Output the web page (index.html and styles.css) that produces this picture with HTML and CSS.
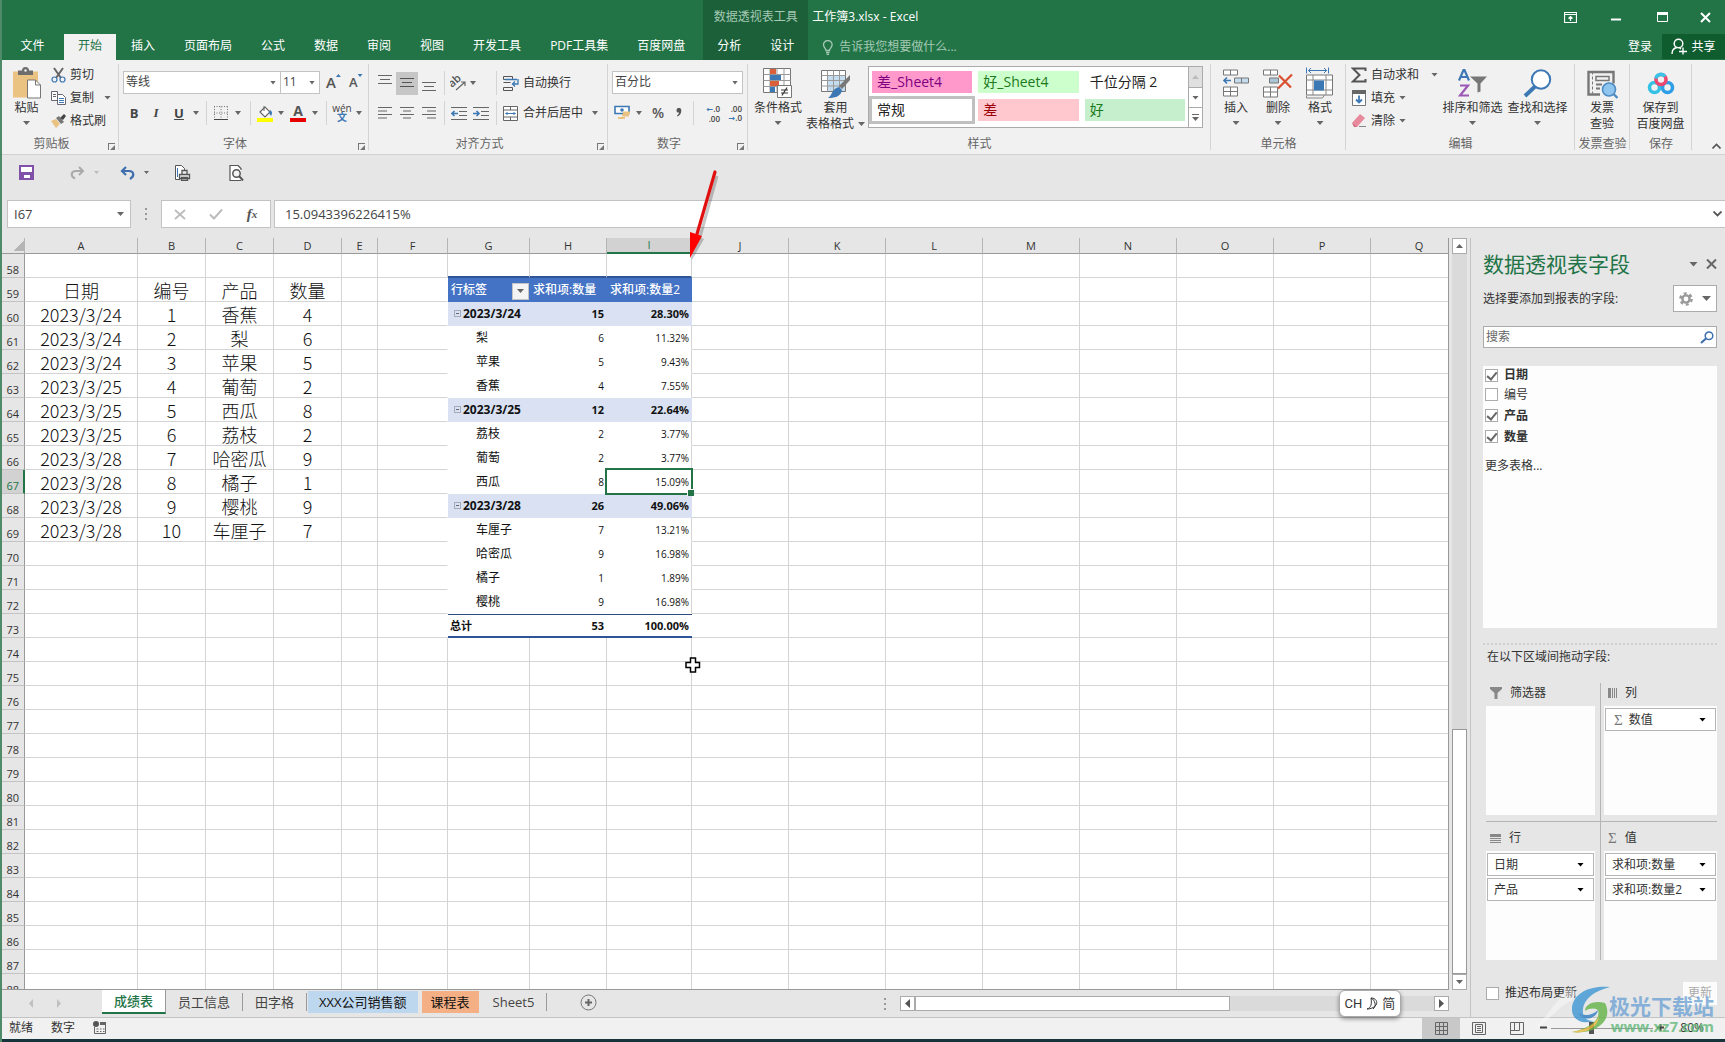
FILE: index.html
```html
<!DOCTYPE html>
<html lang="zh-CN">
<head>
<meta charset="utf-8">
<title>工作簿3.xlsx - Excel</title>
<link rel="stylesheet" href="styles.css">
</head>
<body>
<header class="titlebar">
  <nav class="tabs">
    <button class="tab tab-file">文件</button><button class="tab active">开始</button><button class="tab">插入</button><button class="tab">页面布局</button><button class="tab">公式</button><button class="tab">数据</button><button class="tab">审阅</button><button class="tab">视图</button><button class="tab">开发工具</button><button class="tab">PDF工具集</button><button class="tab">百度网盘</button>
  </nav>
  <div class="context">
    <div class="context-title">数据透视表工具</div>
    <div class="context-tabs"><button class="tab">分析</button><button class="tab">设计</button></div>
  </div>
  <div class="doc">
    <div class="doc-title">工作簿3.xlsx - Excel</div>
    <button class="tell"><svg width="12" height="15" viewBox="0 0 12 15"><path d="M4 10.500C4 8.500 1.500 7.500 1.500 4.800a4.300 4.300 0 0 1 8.600 0C10.100 7.500 7.500 8.500 7.500 10.500ZM4 12.500h3.500M4.500 14.300h2.500" fill="none" stroke="#a5c9b4" stroke-width="1.300"/></svg><span>告诉我您想要做什么...</span></button>
  </div>
  <div class="window">
    <div class="window-buttons">
      <button aria-label="功能区显示选项"><svg width="13" height="11" viewBox="0 0 13 11"><path d="M.5.5h12v10H.5ZM.5 2.500h12M6.500 9V4.500M4.500 6.500l2-2 2 2" fill="none" stroke="#fff" stroke-width="1.200"/></svg></button>
      <button aria-label="最小化"><svg width="10" height="11" viewBox="0 0 10 11"><path d="M0 7.500h10" stroke="#fff" stroke-width="2"/></svg></button>
      <button aria-label="最大化"><svg width="11" height="10" viewBox="0 0 11 10"><path d="M.5.5h10v9H.5Z" fill="none" stroke="#fff"/><path d="M0 0h11v3H0Z" fill="#fff"/></svg></button>
      <button aria-label="关闭"><svg width="11" height="11" viewBox="0 0 11 11"><path d="M1 1l9 9M10 1l-9 9" stroke="#fff" stroke-width="2"/></svg></button>
    </div>
    <div class="account">
      <button class="login">登录</button>
      <button class="share"><svg width="16" height="17" viewBox="0 0 16 17"><circle cx="7.500" cy="5.500" r="4.300" fill="none" stroke="#fff" stroke-width="1.500"/><path d="M1 16c0-4 2-6 5-6.500M8.500 10l1.500 1M8 13.500h8M12 9.500v7" fill="none" stroke="#fff" stroke-width="1.400"/></svg>共享</button>
    </div>
  </div>
</header>

<div class="ribbon">
  <section class="group g-clip">
    <div class="body">
      <button class="big"><svg width="30" height="32" viewBox="0 0 30 32"><path d="M1 4h25v26H1Z" fill="#eac282"/><path d="M6 3h4a3.500 3.500 0 0 1 7 0h4v4.500H6Z" fill="#6d6d6d"/><circle cx="13.500" cy="3" r="1.200" fill="#f1f1f1"/><path d="M15.500 12.500h8l5 5v13h-13Z" fill="#fff" stroke="#777"/><path d="M23.500 12.500v5h5" fill="none" stroke="#777"/></svg><span>粘贴</span><i class="dd"></i></button>
      <div class="stack">
        <button><svg width="15" height="16" viewBox="0 0 15 16"><path d="M3 1l7 10M12 1L5 11" stroke="#666" stroke-width="2"/><circle cx="3.500" cy="12.500" r="2.500" fill="none" stroke="#3c78b4" stroke-width="1.200"/><circle cx="11.500" cy="12.500" r="2.500" fill="none" stroke="#3c78b4" stroke-width="1.200"/></svg>剪切</button>
        <button><svg width="15" height="14" viewBox="0 0 15 14"><path d="M.5.5h6v9h-6ZM2 3.500h3M2 5.500h3" fill="#fff" stroke="#667"/><path d="M6.500 3.500h5l3 3v7h-8Z" fill="#fff" stroke="#667"/><path d="M8 7.500h5M8 9.500h5M8 11.500h5" stroke="#3c78b4"/></svg>复制<i class="dd"></i></button>
        <button><svg width="15" height="14" viewBox="0 0 15 14"><path d="M0 7l5-2 4 5-4 4Z" fill="#eac282"/><path d="M5 4l3-2 5 6-3 2Z" fill="#777"/><path d="M9 4l4-4 2 2-3 4Z" fill="#444"/></svg>格式刷</button>
      </div>
    </div>
    <footer class="has-launch">剪贴板<i class="launch"></i></footer>
  </section>

  <section class="group g-font">
    <div class="body rows">
      <div class="row">
        <label class="combo combo-font"><select aria-label="字体"><option>等线</option></select></label><label class="combo combo-size"><select aria-label="字号"><option>11</option></select></label>
        <button class="grow" aria-label="增大字号">A<i class="tri-up"></i></button><button class="shrink" aria-label="减小字号">A<i class="tri-dn"></i></button>
      </div>
      <div class="row font-tools">
        <button><b>B</b></button><button><em>I</em></button><button><u>U</u></button><i class="dd"></i><i class="sep"></i>
        <button aria-label="边框"><svg width="14" height="14" viewBox="0 0 14 14"><path d="M.5.500v12M7 .5v12M13.500.5v12M0 .5h14M0 7h14" stroke="#777" stroke-dasharray="1 1.500"/><path d="M0 13.500h14" stroke="#444"/></svg></button><i class="dd"></i><i class="sep"></i>
        <button aria-label="填充颜色"><svg width="17" height="17" viewBox="0 0 17 17"><path d="M3 7l5-5 5 5-5 5Z" fill="#fff" stroke="#666" stroke-width="1.200"/><path d="M7 6V1" stroke="#666"/><path d="M13 5c3 2 2 4 1 6l-2-3Z" fill="#3c78b4"/><path d="M0 13h16v4H0Z" fill="#ff0"/></svg></button><i class="dd"></i>
        <button class="color-a" aria-label="字体颜色">A</button><i class="dd"></i><i class="sep"></i>
        <button class="wen">wén<span>文</span></button><i class="dd"></i>
      </div>
    </div>
    <footer class="has-launch">字体<i class="launch"></i></footer>
  </section>

  <section class="group g-align">
    <div class="body rows">
      <div class="row align-top">
        <button aria-label="顶端对齐"><svg width="14" height="18" viewBox="0 0 14 18"><path d="M0 1.500h14M2 5.500h10M0 9.500h14" stroke="#666"/></svg></button>
        <button class="on" aria-label="垂直居中"><svg width="14" height="10" viewBox="0 0 14 10"><path d="M0 .5h14M2 4.500h10M0 8.500h14" stroke="#555"/></svg></button>
        <button aria-label="底端对齐"><svg width="14" height="18" viewBox="0 0 14 18"><path d="M0 8.500h14M2 12.500h10M0 16.500h14" stroke="#666"/></svg></button><i class="sep"></i>
        <button aria-label="方向"><svg width="17" height="16" viewBox="0 0 17 16"><text x="0" y="10" transform="rotate(-42 5 9)" font-size="11" fill="#555" font-weight="600" font-family="Open Sans">ab</text><path d="M6 15L15 7M15 11V7h-4" fill="none" stroke="#666" stroke-width="1.200"/></svg></button><i class="dd"></i><i class="sep"></i>
        <button class="txt"><svg width="16" height="15" viewBox="0 0 16 15"><path d="M.5.5h9v3h-9ZM.5 6.500h7M.5 11.500h9v3h-9Z" fill="none" stroke="#555"/><path d="M2 3.500h12M15 3v5h-5M12 5.500l-2.500 2.500 2.500 2.500" fill="none" stroke="#3c78b4" stroke-width="1.300"/></svg>自动换行</button>
      </div>
      <div class="row align-bottom">
        <button aria-label="左对齐"><svg width="14" height="12" viewBox="0 0 14 12"><path d="M0 .5h14M0 4h9M0 7.500h14M0 11h9" stroke="#666"/></svg></button>
        <button aria-label="居中"><svg width="14" height="12" viewBox="0 0 14 12"><path d="M0 .5h14M3 4h8M0 7.500h14M3 11h8" stroke="#666"/></svg></button>
        <button aria-label="右对齐"><svg width="14" height="12" viewBox="0 0 14 12"><path d="M0 .5h14M5 4h9M0 7.500h14M5 11h9" stroke="#666"/></svg></button><i class="sep"></i>
        <button aria-label="减少缩进"><svg width="16" height="13" viewBox="0 0 16 13"><path d="M0 .5h16M8 4.500h8M8 8.500h8M0 12.500h16" stroke="#666"/><path d="M7 6.500H1M3.500 4L1 6.500 3.500 9" fill="none" stroke="#3c78b4" stroke-width="1.600"/></svg></button>
        <button aria-label="增加缩进"><svg width="16" height="13" viewBox="0 0 16 13"><path d="M0 .5h16M8 4.500h8M8 8.500h8M0 12.500h16" stroke="#666"/><path d="M0 6.500h6M3.500 4L6 6.500 3.500 9" fill="none" stroke="#3c78b4" stroke-width="1.600"/></svg></button><i class="sep"></i>
        <button class="txt"><svg width="16" height="15" viewBox="0 0 16 15"><path d="M.5.500h14v14H.5ZM.5 4h14M.5 11h14M7.500.5V4M7.500 11v3.500" fill="#fff" stroke="#666"/><path d="M2.500 7.500h10M4.500 6L3 7.500 4.500 9M10.500 6L12 7.500 10.500 9" fill="none" stroke="#3c78b4"/></svg>合并后居中</button><i class="dd"></i>
      </div>
    </div>
    <footer class="has-launch">对齐方式<i class="launch"></i></footer>
  </section>

  <section class="group g-num">
    <div class="body rows">
      <div class="row"><label class="combo combo-num"><select aria-label="数字格式"><option>百分比</option></select></label></div>
      <div class="row num-tools">
        <button aria-label="会计数字格式"><svg width="17" height="16" viewBox="0 0 17 16"><path d="M1 1.500h14v7H1Z" fill="#fff" stroke="#3c78b4" stroke-width="1.600"/><circle cx="8" cy="5" r="1.800" fill="#3c78b4"/><path d="M8 9h7v2.500H8ZM4 12h7v2H4ZM9 6.500h7V9H9Z" fill="#eac282"/></svg></button><i class="dd"></i>
        <button class="pct">%</button><button aria-label="千位分隔样式"><svg width="6" height="10" viewBox="0 0 6 10"><path d="M.5 2.300a2.300 2.300 0 0 1 4.800 0C5.500 5 4 7.500 1.500 8.500L1 7.500C2.500 6.500 3 5.500 3 4.500 1.500 5 .5 3.800.5 2.300Z" fill="#555"/></svg></button><i class="sep"></i>
        <button class="dec"><span><b>←</b>.0</span><span>.00</span></button><button class="dec"><span>.00</span><span><b>→</b>.0</span></button>
      </div>
    </div>
    <footer class="has-launch">数字<i class="launch"></i></footer>
  </section>

  <section class="group g-style">
    <div class="body">
      <button class="big"><svg width="30" height="31" viewBox="0 0 30 31"><path d="M.5.500h27v24H.5Z" fill="#fff" stroke="#777"/><path d="M7 .5v24M14 .5v24M21 .5v24M.5 6.500h27M.5 12.500h27M.5 18.500h27" stroke="#999"/><path d="M7 1h6v5H7ZM7 13h9v5H7Z" fill="#d9603b"/><path d="M7 7h11v5H7ZM7 19h5v5H7Z" fill="#3c78b4"/><path d="M14.500 17.500h14v12h-14Z" fill="#fff" stroke="#777"/><path d="M18 22h7M18 25h7M24 19.500l-5 8" stroke="#333" stroke-width="1.200"/></svg><span>条件格式</span><i class="dd"></i></button>
      <button class="big"><svg width="30" height="31" viewBox="0 0 30 31"><path d="M.5 2.500h24v21H.5Z" fill="#fff" stroke="#777"/><path d="M7 8h17v15H7Z" fill="#c5dcee"/><path d="M6.500 2.500v21M12.500 2.500v21M18.500 2.500v21M.5 7.500h24M.5 12.500h24M.5 18h24" stroke="#999"/><path d="M29 7L18 18l3 3 8-9Z" fill="#777"/><path d="M18 19l3 3c-1 7-8 8-14 8 5-3 3-9 11-11Z" fill="#3c78b4"/></svg><span>套用<br>表格格式<i class="dd"></i></span></button>
      <div class="gallery">
        <div class="swatches">
          <button class="sw pink">差_Sheet4</button><button class="sw lime">好_Sheet4</button><button class="sw">千位分隔 2</button>
          <button class="sw normal">常规</button><button class="sw bad">差</button><button class="sw good">好</button>
        </div>
        <div class="gallery-nav"><button class="off" aria-label="上一行"><i class="dd up"></i></button><button aria-label="下一行"><i class="dd"></i></button><button class="more" aria-label="其他"><i class="dd"></i></button></div>
      </div>
    </div>
    <footer>样式</footer>
  </section>

  <section class="group g-cells">
    <div class="body">
      <button class="big"><svg width="28" height="30" viewBox="0 0 28 30"><path d="M1.500 1.500h14v5h-14ZM8.500 1.500v5M1.500 18.500h14v9h-14ZM8.500 18.500v9M1.500 23h14" fill="#fff" stroke="#777"/><path d="M12.500 9.500h14v5h-14ZM19.500 9.500v5" fill="#c5dcee" stroke="#777"/><path d="M9 12H2M5 9l-3 3 3 3" fill="none" stroke="#3c78b4" stroke-width="1.600"/></svg><span>插入</span><i class="dd"></i></button>
      <button class="big"><svg width="30" height="30" viewBox="0 0 30 30"><path d="M.5 1.500h14v5H.5ZM7.500 1.500v5M.5 18.500h14v10H.5ZM7.500 18.500v10M.5 23.500h14" fill="#fff" stroke="#777"/><path d="M6.500 9.500h9v5h-9Z" fill="#a9c6d6" stroke="#777"/><path d="M16 7l12 12M29 6L15 20" stroke="#d9502f" stroke-width="2.200"/></svg><span>删除</span><i class="dd"></i></button>
      <button class="big"><svg width="30" height="32" viewBox="0 0 30 32"><path d="M1.500 7.500h26v20h-26Z" fill="#fff" stroke="#777"/><path d="M8 7.500v20M21 7.500v20M1.500 12.500h26M1.500 22.500h26M1.500 28v2.500h16l2-3" fill="none" stroke="#888"/><path d="M9 13h10v10H9Z" fill="#3c78b4"/><path d="M1.500 0v6M23.500 0v6M3 3h19M6 .5L3.500 3 6 5.500M19 .5L21.500 3 19 5.500" fill="none" stroke="#3c78b4"/></svg><span>格式</span><i class="dd"></i></button>
    </div>
    <footer>单元格</footer>
  </section>

  <section class="group g-edit">
    <div class="body">
      <div class="stack">
        <button><svg width="16" height="16" viewBox="0 0 16 16"><path d="M14.500 4V1.500H2L8.500 8 2 14.500h12.500V12" fill="none" stroke="#555" stroke-width="2"/></svg>自动求和<i class="dd"></i></button>
        <button><svg width="16" height="16" viewBox="0 0 16 16"><path d="M1.500.5h13v15h-13Z" fill="#fff" stroke="#777"/><path d="M1 0h14v4H1Z" fill="#666"/><path d="M8 5.500v7M5 9.500l3 3 3-3" fill="none" stroke="#3c78b4" stroke-width="1.800"/></svg>填充<i class="dd"></i></button>
        <button><svg width="16" height="16" viewBox="0 0 16 16"><path d="M1 10L9 1l5 4-8 9H4Z" fill="#e88a9b"/><path d="M1 10l5 4H3Z" fill="#c96c7c"/><path d="M8 13.500h7" stroke="#888"/></svg>清除<i class="dd"></i></button>
      </div>
      <button class="big wide"><svg width="30" height="30" viewBox="0 0 30 30"><path d="M1 12L5.500 1.500h1L11 12M3 8.500h6" fill="none" stroke="#3c78b4" stroke-width="2.200"/><path d="M2 17h8L2 27h9" fill="none" stroke="#9b59b6" stroke-width="2.200"/><path d="M12 8h17l-6.500 7v8l-3 1v-9Z" fill="#777"/></svg><span>排序和筛选</span><i class="dd"></i></button>
      <button class="big wide"><svg width="30" height="30" viewBox="0 0 30 30"><circle cx="18" cy="11" r="9.200" fill="#fff" stroke="#3c78b4" stroke-width="2"/><path d="M12 18L2 27.500" stroke="#3c78b4" stroke-width="4"/></svg><span>查找和选择</span><i class="dd"></i></button>
    </div>
    <footer>编辑</footer>
  </section>

  <section class="group g-inv">
    <div class="body"><button class="big wide"><svg width="32" height="30" viewBox="0 0 32 30"><path d="M4 26H2.500V3.500h25V15M2 26h12" fill="none" stroke="#777" stroke-width="2.400"/><path d="M6.500 3v22" stroke="#777" stroke-dasharray="3 2"/><path d="M10 8h13v4H10Z" fill="none" stroke="#777" stroke-width="1.500"/><path d="M10 16h6M10 20h4" stroke="#777" stroke-width="2"/><circle cx="23" cy="21" r="6.500" fill="#8fc5ee" stroke="#4c8cc4" stroke-width="1.600"/><path d="M27.500 25.500l4 4" stroke="#4c8cc4" stroke-width="2.400"/></svg><span>发票<br>查验</span></button></div>
    <footer>发票查验</footer>
  </section>
  <section class="group g-save">
    <div class="body"><button class="big wide"><svg width="28" height="28" viewBox="0 0 28 28"><circle cx="7.500" cy="18" r="5" fill="none" stroke="#35c1e4" stroke-width="3.600"/><circle cx="20.500" cy="18" r="5" fill="none" stroke="#2e9fe6" stroke-width="3.600"/><circle cx="14" cy="10" r="5" fill="none" stroke="#ef476f" stroke-width="3.600"/><path d="M9 9a5 5 0 0 1 9-2" fill="none" stroke="#3ac4ea" stroke-width="3.600"/></svg><span>保存到<br>百度网盘</span></button></div>
    <footer>保存</footer>
  </section>
  <button class="collapse" aria-label="折叠功能区"><svg width="9" height="6" viewBox="0 0 9 6"><path d="M.5 5.500l4-4 4 4" fill="none" stroke="#555" stroke-width="1.600"/></svg></button>
</div>

<div class="quick">
  <button aria-label="保存"><svg width="15" height="15" viewBox="0 0 15 15"><path d="M1 1h13v13H1Z" fill="#fff" stroke="#8150a8" stroke-width="2"/><path d="M1 7h13v7h-3v-4H5v4H1Z" fill="#8150a8"/></svg></button>
  <button aria-label="恢复"><svg width="15" height="14" viewBox="0 0 15 14"><path d="M9 1l4 4-4 4M13 5H6C1 5 0 10 5 12.500" fill="none" stroke="#aaa" stroke-width="2"/></svg></button><i class="dd faint"></i>
  <button aria-label="撤消"><svg width="15" height="14" viewBox="0 0 15 14"><path d="M6 1L2 5l4 4M2 5h7c5 0 6 5 1 8" fill="none" stroke="#3f6fad" stroke-width="2.200"/></svg></button><i class="dd"></i>
  <button aria-label="快速打印"><svg width="17" height="16" viewBox="0 0 17 16"><path d="M6 14.500H1.500V.5h6l3 3V6" fill="#fff" stroke="#555"/><path d="M3.500 3v9" stroke="#3c78b4"/><path d="M5.500 9.500h10v4h-10ZM8 5.500h5v4H8ZM7.500 12.500h6v3h-6Z" fill="#eee" stroke="#555" stroke-width="1.300"/></svg></button>
  <button aria-label="打印预览"><svg width="15" height="16" viewBox="0 0 15 16"><path d="M12 5V3.500L9 .5H1v15h11" fill="#fff" stroke="#555" stroke-width="1.200"/><circle cx="7.500" cy="8.500" r="3.700" fill="#f3f3f3" stroke="#555" stroke-width="1.500"/><path d="M10 11l4 4.500" stroke="#555" stroke-width="2"/></svg></button>
</div>

<div class="formula">
  <div class="namebox"><input aria-label="名称框" value="I67"><i class="dd"></i></div>
  <i class="dots"></i>
  <div class="fx">
    <button aria-label="取消"><svg width="12" height="11" viewBox="0 0 12 11"><path d="M1 1l10 9M11 1L1 10" stroke="#bbb" stroke-width="1.700"/></svg></button>
    <button aria-label="输入"><svg width="14" height="11" viewBox="0 0 14 11"><path d="M1 5.500l4 4 8-9" fill="none" stroke="#bbb" stroke-width="2"/></svg></button>
    <button class="fn">f<sub>x</sub></button>
  </div>
  <div class="entry"><input aria-label="编辑栏" value="15.0943396226415%"><button aria-label="展开编辑栏"><svg width="9" height="6" viewBox="0 0 9 6"><path d="M.5.5l4 4 4-4" fill="none" stroke="#555" stroke-width="1.800"/></svg></button></div>
</div>

<main>
  <div class="book">
    <div class="sheet-row">
      <div class="sheet">
        <table id="grid"></table>
        <svg class="cursor" width="16" height="16" viewBox="0 0 16 16"><path d="M5.500 1h5v4.500h4v5h-4V15h-5v-4.500H1v-5h4.500Z" fill="#fff" stroke="#000" stroke-width="1.500"/></svg>
      </div>
      <div class="vscroll"><button aria-label="向上滚动"><i class="dd up"></i></button><div class="vtrack"><div class="vthumb"></div></div><button aria-label="向下滚动"><i class="dd"></i></button></div>
    </div>
    <div class="sheet-tabs">
      <div class="nav-arrows"><i class="tri-l"></i><i class="tri-r"></i></div>
      <button class="current">成绩表</button><button>员工信息</button><button>田字格</button><button class="blue">XXX公司销售额</button><button class="orange">课程表</button><button>Sheet5</button>
      <button class="add" aria-label="新工作表"><svg width="17" height="17" viewBox="0 0 17 17"><circle cx="8.500" cy="8.500" r="7.500" fill="none" stroke="#777"/><path d="M8.500 5v7M5 8.500h7" stroke="#666" stroke-width="2"/></svg></button>
      <i class="dots"></i>
      <div class="hscroll"><button aria-label="向左滚动"><i class="tri-l"></i></button><div class="htrack"><div class="hthumb"></div></div><button aria-label="向右滚动"><i class="tri-r"></i></button></div>
    </div>
  </div>

  <aside class="pane">
    <div class="pane-head"><h2>数据透视表字段</h2><i class="dd"></i><button aria-label="关闭"><svg width="11" height="10" viewBox="0 0 11 10"><path d="M1 .5l9 9M10 .5l-9 9" stroke="#666" stroke-width="2"/></svg></button></div>
    <div class="pane-sub"><span>选择要添加到报表的字段:</span><button aria-label="工具"><svg width="14" height="14" viewBox="0 0 14 14"><circle cx="7" cy="7" r="3.600" fill="none" stroke="#999" stroke-width="2.400"/><circle cx="7" cy="7" r="5.600" fill="none" stroke="#999" stroke-width="2.400" stroke-dasharray="2.930 2.930"/></svg><i class="dd"></i></button></div>
    <div class="search"><input aria-label="搜索字段" placeholder="搜索"><svg width="14" height="13" viewBox="0 0 14 13"><circle cx="9" cy="4.800" r="3.800" fill="none" stroke="#3f6fad" stroke-width="1.500"/><path d="M6 7.500L1 12" stroke="#3f6fad" stroke-width="2.200"/></svg></div>
    <div class="fields">
      <label class="on"><input type="checkbox" checked>日期</label>
      <label><input type="checkbox">编号</label>
      <label class="on"><input type="checkbox" checked>产品</label>
      <label class="on"><input type="checkbox" checked>数量</label>
      <a href="#">更多表格...</a>
    </div>
    <div class="drag">在以下区域间拖动字段:</div>
    <div class="areas">
      <div class="area"><h3><svg width="12" height="12" viewBox="0 0 12 12"><path d="M0 0h12v2L7.500 6v6h-3V6L0 2Z" fill="#888"/></svg>筛选器</h3><div class="drop"></div></div>
      <div class="area"><h3><svg width="9" height="10" viewBox="0 0 9 10"><path d="M0 0h3v10H0Z" fill="#888"/><path d="M4.500 0v10M6.500 0v10M8.500 0v10" stroke="#888"/></svg>列</h3><div class="drop"><button><span class="sigma">Σ</span>数值<i class="dd"></i></button></div></div>
      <div class="area"><h3><svg width="11" height="9" viewBox="0 0 11 9"><path d="M0 0h11v3H0Z" fill="#888"/><path d="M0 4.500h11M0 6.500h11M0 8.500h11" stroke="#888"/></svg>行</h3><div class="drop"><button>日期<i class="dd"></i></button><button>产品<i class="dd"></i></button></div></div>
      <div class="area"><h3><span class="sigma">Σ</span>值</h3><div class="drop"><button>求和项:数量<i class="dd"></i></button><button>求和项:数量2<i class="dd"></i></button></div></div>
    </div>
    <div class="defer"><label><input type="checkbox">推迟布局更新</label><button>更新</button></div>
  </aside>
</main>

<div class="status">
  <span>就绪</span><span>数字</span>
  <svg width="13" height="13" viewBox="0 0 13 13"><circle cx="3" cy="3" r="3" fill="#555"/><path d="M7 1h6v3H7Z" fill="#666"/><path d="M1.500 6v6.500h11V4M3.500 8h2M7 8h1.500M10 8h1.500M3.500 10.500h2M7 10.500h1.500M10 10.500h1.500" fill="none" stroke="#666"/></svg>
  <div class="views">
    <button class="on" aria-label="普通"><svg width="13" height="13" viewBox="0 0 13 13"><path d="M.5.5h12v12H.5ZM4.500.5v12M8.500.5v12M.5 4.500h12M.5 8.500h12" fill="none" stroke="#666"/></svg></button>
    <button aria-label="页面布局"><svg width="14" height="13" viewBox="0 0 14 13"><path d="M.5.5h13v12H.5ZM3.500 2.500h7v8h-7ZM5 4.500h4M5 6.500h4M5 8.500h4" fill="none" stroke="#666"/></svg></button>
    <button aria-label="分页预览"><svg width="14" height="13" viewBox="0 0 14 13"><path d="M.5.5h13v12H.5ZM4.500.5v8M9.500.5v8M.5 8.500h9" fill="none" stroke="#666"/></svg></button>
  </div>
  <button class="zoom-btn" aria-label="缩小"><svg width="7" height="7" viewBox="0 0 7 7"><path d="M0 3.500h7" stroke="#444" stroke-width="2"/></svg></button>
  <input type="range" aria-label="缩放" min="10" max="190" value="80">
  <button class="zoom-btn" aria-label="放大"><svg width="7" height="7" viewBox="0 0 7 7"><path d="M0 3.500h7M3.500 0v7" stroke="#444" stroke-width="2"/></svg></button>
  <span class="zoom">80%</span>
</div>

<svg class="arrow" width="40" height="96" viewBox="0 0 40 96"><g opacity=".3" transform="translate(3 3)"><path d="M30 5L13 66" stroke="#444" stroke-width="3"/><path d="M5 89L4 62l13 6Z" fill="#444"/></g><path d="M31 4L13 66" stroke="#e01010" stroke-width="3.200" stroke-linecap="round"/><path d="M6 90L6 64l6 2 6 2Z" fill="#f00"/></svg>
<div class="ime">CH <svg width="12" height="13" viewBox="0 0 12 13"><path d="M5 1c4 2 6 8 2 11M5 1c5 0 7 4 5 7-2 3-6 4-9 4 4-1 5-5 4-11" fill="none" stroke="#333"/></svg> 简</div>
<div class="mark">
  <svg width="76" height="52" viewBox="0 0 76 52"><path d="M0 46L34 4l8 6-6 8C26 22 20 32 0 46Z" fill="#fff" opacity=".5"/><path d="M75 4C52 2 38 12 37 25c-1 12 11 17 22 13-8 0-12-4-11-12 1-10 11-18 27-22Z" fill="#3c97d4"/><path d="M70 20C58 17 50 22 50 28c5-3 9-3 13-1 3 8-6 18-26 22 24 3 42-12 33-29Z" fill="#62b345"/><path d="M43 30c6 3 14 3 20-3-1 8-14 13-20 3Z" fill="#2f7fc4"/><path d="M37 49c14-2 24-8 27-16-1 12-13 18-27 16Z" fill="#eab839"/></svg>
  <div><strong>极光下载站</strong><span>www.xz7.com</span></div>
</div>
<script src="grid.js"></script>
</body>
</html>
```
FILE: styles.css
```css
* { box-sizing: border-box; }
body {
  margin: 0; height: 100vh; display: flex; flex-direction: column; overflow: hidden; position: relative;
  border-left: 2px solid #4f8a69; background: #e6e6e6; color: #333;
  font: 12px/16px "Open Sans", "Noto Sans CJK SC", sans-serif;
}
button { border: 0; background: none; padding: 0; margin: 0; font: inherit; color: inherit; display: flex; align-items: center; justify-content: center; white-space: nowrap; }
input, select { font: inherit; color: inherit; border: 0; outline: 0; margin: 0; padding: 0; background: none; min-width: 0; }
svg { flex: none; display: block; }
i { flex: none; }

/* small drawn triangles */
.dd { width: 7px; height: 4px; background: #666; clip-path: polygon(0 0, 100% 0, 50% 100%); }
.dd.up { clip-path: polygon(50% 0, 100% 100%, 0 100%); }
.dd.faint { background: #bbb; }
.tri-l, .tri-r { width: 5px; height: 9px; background: #555; clip-path: polygon(100% 0, 100% 100%, 0 50%); }
.tri-r { clip-path: polygon(0 0, 100% 50%, 0 100%); }

/* title bar */
.titlebar { display: flex; align-items: flex-end; height: 60px; flex: none; background: #227447; color: #fff; }
.tabs, .context-tabs { display: flex; gap: 1px; }
.tab { height: 26px; padding: 0 14px 2px; }
.tab-file { width: 61px; }
.tab.active { background: #f1f1f1; color: #227447; }
.context { background: #1b6039; margin-left: 4px; height: 60px; }
.context-title { height: 34px; line-height: 34px; text-align: center; color: #a5c9b4; }
.doc { height: 60px; padding-left: 4px; }
.doc-title { height: 34px; line-height: 34px; }
.tell { height: 26px; padding-left: 10px; gap: 5px; color: #a5c9b4; }
.window { margin-left: auto; height: 60px; width: 178px; }
.window-buttons { display: grid; grid-template-columns: 46px 46px 46px 1fr; height: 34px; }
.account { display: flex; height: 26px; justify-content: flex-end; padding-bottom: 1px; }
.login { padding: 0 10px; }
.share { background: #0f5c2f; width: 63px; gap: 4px; }

/* ribbon */
.ribbon { display: flex; height: 95px; flex: none; background: #f1f1f1; border-bottom: 1px solid #d2d2d2; }
.group { position: relative; height: 94px; padding-top: 2px; flex: none; }
.group::after { content: ""; position: absolute; right: 0; top: 4px; bottom: 4px; border-right: 1px solid #d4d4d4; }
.group .body { display: flex; height: 74px; }
.group footer { position: relative; height: 16px; text-align: center; color: #666; }
.group .has-launch { padding-right: 18px; }
.launch { position: absolute; right: 4px; bottom: 2px; width: 7px; height: 7px; border-left: 1px solid #777; border-top: 1px solid #777; }
.launch::after { content: ""; position: absolute; right: 0; bottom: 0; width: 5px; height: 5px; background: #777; clip-path: polygon(100% 0, 100% 100%, 0 100%); }
.g-clip { width: 117px; }
.g-font { width: 250px; }
.g-align { width: 239px; }
.g-num { width: 140px; }
.g-style { width: 463px; }
.g-cells { width: 135px; }
.g-edit { width: 229px; }
.g-inv { width: 55px; }
.g-save { width: 62px; }
.big { flex-direction: column; justify-content: flex-start; width: 42px; padding-top: 5px; line-height: 16px; }
.big svg { height: 33px; }
.big > .dd { margin-top: 5px; }
.big span .dd { display: inline-block; margin: 0 0 2px 4px; }
.stack { display: grid; grid-template-rows: repeat(3, 23px); justify-items: start; padding-top: 1px; }
.stack button { gap: 4px; }
.stack .dd { margin-left: 8px; }
.g-clip .big { width: 49px; }
.g-clip .dd { margin-left: 6px; }
.g-clip .big .dd { margin-left: 0; }
.rows.body { flex-direction: column; gap: 8px; padding: 9px 0 0 4px; }
.row { display: flex; height: 22px; align-items: center; }
.row .dd { justify-self: center; width: 6px; }
.sep { width: 1px; height: 24px; background: #d4d4d4; justify-self: center; }
.combo { position: relative; height: 23px; background: #fff; border: 1px solid #c3c3c3; display: block; }
.combo select { appearance: none; width: 100%; height: 21px; padding-left: 2px; color: #444; }
.combo::after { content: ""; position: absolute; right: 4px; top: 9px; width: 6px; height: 4px; background: #666; clip-path: polygon(0 0, 100% 0, 50% 100%); }
.combo-font { width: 158px; }
.combo-size { width: 40px; margin-left: -1px; }
.combo-num { width: 131px; }
.grow, .shrink { align-items: center; color: #555; font-size: 15px; font-weight: 600; margin-left: 6px; }
.shrink { font-size: 13px; margin-left: 8px; }
.tri-up, .tri-dn { width: 5px; height: 3px; margin-bottom: 13px; background: #3c78b4; clip-path: polygon(50% 0, 100% 100%, 0 100%); }
.tri-dn { clip-path: polygon(0 0, 100% 0, 50% 100%); }
.font-tools { display: grid; grid-template-columns: 22px 22px 24px 10px 10px 20px 14px 10px 20px 12px 22px 12px 10px 22px 12px; }
.font-tools b, .font-tools em, .font-tools u { font-size: 13px; font-weight: 700; color: #444; }
.font-tools em { font-family: "Liberation Serif", serif; }
.color-a { font-size: 14px; line-height: 14px; font-weight: 700; color: #555; border-bottom: 4px solid #e60000; width: 16px; justify-self: center; }
.wen { flex-direction: column; font-size: 10px; line-height: 8px; color: #444; }
.wen span { color: #3c78b4; font-size: 10px; line-height: 10px; font-weight: 700; }
.align-top { display: grid; grid-template-columns: 22px 22px 22px 8px 20px 24px 8px auto; justify-content: start; }
.align-bottom { display: grid; grid-template-columns: 22px 22px 22px 8px 22px 22px 8px 88px 14px; }
.rows .align-top, .rows .align-bottom { padding-left: 1px; }
.row.align-top .dd { justify-self: start; margin-left: 2px; }
.row .on { background: #c6c6c6; height: 23px; }
.txt { gap: 4px; padding-left: 3px; justify-content: flex-start; }
.num-tools { display: grid; grid-template-columns: 20px 14px 24px 18px 10px 22px 22px; }
.pct { font-size: 14px; font-weight: 600; color: #555; }
.dec { flex-direction: column; font-size: 8px; line-height: 9px; align-items: flex-end; color: #444; font-weight: 600; }
.dec b { color: #3c78b4; font-family: "DejaVu Sans", sans-serif; }

.g-style .body { padding-left: 5px; }
.g-style .big { width: 50px; }
.g-style .big + .big { width: 65px; }
.gallery { display: flex; flex: 1; margin: 4px 8px 8px 0; background: #fff; border: 1px solid #ababab; }
.swatches { flex: 1; display: grid; grid-template-columns: repeat(3, 1fr); grid-template-rows: 22px 22px; gap: 6px; padding: 4px 3px 3px 3px; }
.sw { justify-content: flex-start; padding-left: 5px; font-size: 14px; color: #222; height: 22px; }
.pink { background: #ff99cc; color: #800080; }
.lime { background: #ccffcc; color: #1b7a1b; }
.bad { background: #ffc7ce; color: #9c0006; }
.good { background: #c6efce; color: #1b7a1b; }
.normal { outline: 3px solid #c0c0c0; }
.gallery-nav { width: 14px; display: grid; grid-template-rows: repeat(3, 1fr); border-left: 1px solid #ababab; }
.gallery-nav button + button { border-top: 1px solid #ababab; }
.gallery-nav .off { background: #e0e0e0; }
.off .dd { background: #bbb; }
.more { flex-direction: column; gap: 2px; }
.more::before { content: ""; width: 7px; height: 1px; background: #666; }
.g-cells .body { padding-left: 4px; }
.g-edit .body { padding-left: 5px; }
.g-edit .stack { width: 89px; }
.g-edit .stack button + button .dd { margin-left: 0; }
.wide { width: 65px; flex: none; }
.g-inv .wide { width: 54px; }
.g-save .wide { width: 61px; }
.collapse { margin: 83px 4px 0 auto; height: 6px; width: 10px; }

/* quick access and formula bar */
.quick { display: flex; align-items: center; height: 35px; flex: none; padding-left: 17px; }
.quick button:nth-of-type(2) { margin-left: 36px; }
.quick button:nth-of-type(3) { margin-left: 21px; }
.quick .dd { margin-left: 9px; width: 5px; height: 3px; }
.quick button:nth-of-type(4) { margin-left: 25px; }
.quick button:nth-of-type(5) { margin-left: 38px; }
.formula { display: flex; height: 28px; flex: none; margin: 10px 0; font-size: 13px; color: #444; }
.namebox { display: flex; align-items: center; width: 124px; margin-left: 5px; padding: 0 6px; background: #fff; border: 1px solid #c3c3c3; }
.namebox input { flex: 1; }
.dots { width: 2px; height: 12px; margin: auto 14px; background: repeating-linear-gradient(#999 0 2px, transparent 2px 5px); }
.fx { display: grid; grid-template-columns: repeat(3, 1fr); width: 110px; background: #fff; border: 1px solid #c3c3c3; }
.fn { font: italic 700 15px/16px "Liberation Serif", serif; color: #555; }
.fn sub { font-size: 11px; line-height: 8px; }
.entry { flex: 1; display: flex; margin-left: 3px; background: #fff; border: 1px solid #c3c3c3; border-right: 0; padding: 0 3px 0 10px; }
.entry input { flex: 1; }

/* worksheet */
main { flex: 1; display: flex; min-height: 0; }
.book { flex: 1; display: flex; flex-direction: column; min-width: 0; }
.sheet-row { flex: 1; display: flex; min-height: 0; }
.sheet { position: relative; flex: 1; overflow: hidden; border-right: 1px solid #999; border-bottom: 1px solid #999; }
table { width: calc(100% + 20px); table-layout: fixed; border-spacing: 0; color: #111; }
th, td { padding: 0; font-weight: 400; white-space: nowrap; }
thead th { height: 16px; line-height: 15px; font-size: 11px; border-right: 1px solid #b5b5b5; border-bottom: 1px solid #999; background: #e6e6e6; color: #333; }
thead .picked { background: #d2d2d2; border-bottom: 2px solid #227447; line-height: 14px; color: #227447; }
thead th:first-child { background: linear-gradient(135deg, transparent 50%, #b5b5b5 50%) 12px 3px / 10px 10px no-repeat #e6e6e6; }
tbody th { height: 24px; padding: 9px 5px 0 0; text-align: right; line-height: 14px; font-size: 11px; background: #e6e6e6; color: #333; border-right: 1px solid #999; border-bottom: 1px solid #c3c3c3; }
tbody .picked { background: #d2d2d2; color: #227447; border-right: 2px solid #227447; padding-right: 4px; }
td { height: 24px; border-right: 1px solid #d4d4d4; border-bottom: 1px solid #d4d4d4; background: #fff; }
.data { font-family: "Noto Sans CJK SC", sans-serif; font-weight: 300; font-size: 18px; line-height: 21px; padding-top: 2px; text-align: center; }
.above { border-bottom: 2px solid #2f5597; }
.beside { border-right-color: #fff; }
.pv { border-color: #fff; font-size: 11px; line-height: 22px; text-align: right; padding: 0 2px; }
.pv.pct-col { border-right-color: #d4d4d4; }
.pv.small { font-size: 10px; }
.pv.label { text-align: left; }
.pv.item { font-size: 12px; padding-left: 28px; }
.pv.sub { background: #d9e1f2; border-color: #d9e1f2; font-weight: 700; }
.pv.sub.label { font-size: 12px; }
.pv.head { background: #4472c4; border-color: #4472c4; color: #fff; text-align: left; padding-left: 3px; font-size: 12px; font-weight: 500; }
.pv.total { border-right: 0; border-top: 1px solid #2f4b7c; border-bottom: 2px solid #2f5597; font-weight: 700; line-height: 20px; padding-right: 3px; }
.minus { display: inline-block; width: 7px; height: 7px; margin: 0 2px 1px 4px; border: 1px solid #a5acb5; vertical-align: middle; background: linear-gradient(#667, #667) 1px 2px / 3px 1px no-repeat; }
.filter { float: right; width: 17px; height: 17px; margin-top: 4px; margin-right: -2px; background: #f4f4f4; border: 1px solid #c3c3c3; }
.cell-on { position: relative; }
.cell-on::before { content: ""; position: absolute; inset: -2px; border: 2px solid #227447; }
.cell-on::after { content: ""; position: absolute; right: -3px; bottom: -3px; width: 6px; height: 6px; background: #227447; border: 1px solid #fff; border-width: 1px 0 0 1px; }
.cursor { position: absolute; left: 683px; top: 419px; }
.vscroll { width: 15px; margin: 0 3px; display: flex; flex-direction: column; }
.vscroll button { height: 16px; background: #fff; border: 1px solid #ababab; }
.vtrack { flex: 1; background: #dadada; display: flex; flex-direction: column; justify-content: flex-end; }
.vthumb { height: 34%; background: #fff; border: 1px solid #999; }
.sheet-tabs { display: flex; height: 27px; flex: none; padding-right: 21px; }
.sheet-tabs > button { height: 18px; margin: 3px 0; padding: 0 12px; border-right: 1px solid #999; font-size: 13px; color: #444; }
.nav-arrows { display: flex; gap: 24px; width: 100px; padding: 9px 0 0 27px; }
.nav-arrows i { background: #c0c0c0; width: 4px; }
.sheet-tabs > .current { height: 24px; margin: 0; background: #fff; color: #227447; font-weight: 500; border-right: 1px solid #999; border-bottom: 2px solid #227447; }
.sheet-tabs > .blue, .sheet-tabs > .orange { height: 22px; margin: 1px 0 0 1px; padding: 0 11px; background: #bdd7ee; color: #111; border-right: 2px solid #e6e6e6; }
.sheet-tabs > .orange { background: #f4b084; margin-left: 2px; padding: 0 9px; }
.sheet-tabs > .add { border: 0; margin-left: 21px; }
.sheet-tabs .dots { margin: 8px 14px 0 auto; }
.hscroll { width: 549px; display: flex; height: 15px; margin-top: 6px; }
.hscroll button { width: 15px; background: #fff; border: 1px solid #ababab; }
.htrack { flex: 1; background: #dadada; }
.hthumb { width: 315px; height: 15px; background: #fff; border: 1px solid #ababab; }

/* field list */
.pane { width: 255px; flex: none; border-left: 1px solid #c3c3c3; padding: 12px 8px 12px 12px; display: flex; flex-direction: column; }
.pane-head { display: flex; align-items: center; height: 28px; gap: 8px; }
h2 { margin: 0; flex: 1; font-size: 21px; line-height: 28px; font-weight: 400; color: #227447; }
.pane-head .dd, .pane-sub .dd { width: 9px; height: 5px; }
.pane-sub { display: flex; align-items: center; justify-content: space-between; height: 27px; margin-top: 7px; }
.pane-sub button { width: 44px; height: 27px; background: #fff; border: 1px solid #ababab; gap: 9px; }
.search { display: flex; align-items: center; height: 22px; margin-top: 14px; padding: 0 2px; background: #fff; border: 1px solid #ababab; flex: none; }
.search input { flex: 1; }
.search input::placeholder { color: #666; opacity: 1; }
.fields { flex: 1; margin-top: 18px; background: #fdfdfd; padding: 0 2px; min-height: 0; overflow: hidden; }
.fields label { display: flex; align-items: center; height: 21px; gap: 6px; }
.fields label:first-child { height: 18px; }
.fields .on { font-weight: 600; }
.fields a { display: block; margin-top: 11px; color: #333; text-decoration: none; }
input[type=checkbox] { appearance: none; width: 13px; height: 13px; border: 1px solid #ababab; background: #fff; position: relative; flex: none; }
input[type=checkbox]:checked::after { content: ""; position: absolute; left: 3px; top: 0; width: 4px; height: 8px; border: solid #666; border-width: 0 2px 2px 0; transform: rotate(40deg); }
.drag { margin-top: 15px; padding: 4px 0 0 4px; height: 40px; border-top: 2px dotted #d0d0d0; }
.areas { display: grid; grid-template-columns: 114px 1fr; margin-left: 3px; }
.area { padding-right: 5px; height: 139px; }
.area:nth-child(even) { border-left: 1px solid #b5b5b5; padding: 0 0 0 3px; }
.area:nth-child(n+3) { border-top: 1px solid #b5b5b5; padding-top: 6px; }
.area:nth-child(-n+2) { height: 138px; }
h3 { margin: 0; height: 23px; display: flex; align-items: center; gap: 8px; padding: 0 0 3px 4px; font-size: 12px; font-weight: 400; }
.drop { height: 109px; background: #fdfdfd; padding: 2px 1px; display: flex; flex-direction: column; gap: 2px; }
.drop button { height: 23px; flex: none; background: #fff; border: 1px solid #b5b5b5; padding: 0 9px 0 6px; justify-content: flex-start; }
.drop .dd { margin-left: auto; background: #000; }
.sigma { font: 15px/16px "Liberation Serif", serif; color: #777; }
.drop .sigma { margin: 0 6px 0 2px; }
.defer { display: flex; justify-content: space-between; align-items: center; height: 24px; margin: 21px 0 0 3px; }
.defer label { display: flex; align-items: center; gap: 6px; }
.defer button { width: 34px; height: 23px; background: #fcfcfc; color: #aaa; }

/* status bar */
.status { display: flex; align-items: center; flex: none; height: 25px; padding: 0 21px 2px 7px; background: #f1f1f1; border-top: 1px solid #c3c3c3; border-bottom: 3px solid #17343c; gap: 18px; }
.views { display: flex; margin-left: auto; align-self: stretch; margin-bottom: -2px; }
.views button { width: 38px; }
.views .on { background: #c8c8c8; }
.status .zoom-btn { margin: 0 -14px 0 -14px; }
input[type=range] { appearance: none; width: 102px; height: 14px; background: linear-gradient(#999, #999) 0 7px / 100% 1px no-repeat; }
input[type=range]::-webkit-slider-thumb { appearance: none; width: 5px; height: 12px; background: #555; }
.zoom { margin-left: 12px; }

/* things floating over the window */
.arrow { position: absolute; left: 682px; top: 168px; }
.ime { position: absolute; left: 1337px; top: 990px; width: 62px; height: 27px; display: flex; align-items: center; justify-content: center; gap: 4px; background: #fff; border: 1px solid #aaa; border-radius: 6px; box-shadow: 0 2px 4px #0006; font: 13px/16px Roboto, "Noto Sans CJK SC", sans-serif; white-space: nowrap; }
.mark { position: absolute; right: 11px; bottom: 7px; display: flex; opacity: .8; pointer-events: none; }
.mark div { display: flex; flex-direction: column; justify-content: flex-end; margin-left: -2px; }
.mark strong { font-size: 21px; line-height: 22px; color: #6fa3d4; text-align: right; }
.mark span { font: 700 15px/18px "Open Sans", sans-serif; color: #62b87a; text-align: right; }
```
FILE: grid.js
```js
// Builds the visible part of the worksheet: rows 58-88, columns A-Q.
const cols = [['A', 113], ['B', 68], ['C', 68], ['D', 68], ['E', 36], ['F', 70], ['G', 82], ['H', 77], ['I', 85],
  ['J', 97], ['K', 97], ['L', 97], ['M', 97], ['N', 97], ['O', 97], ['P', 97], ['Q', 0]];

const orders = [
  ['日期', '编号', '产品', '数量'],
  ['2023/3/24', 1, '香蕉', 4], ['2023/3/24', 2, '梨', 6], ['2023/3/24', 3, '苹果', 5],
  ['2023/3/25', 4, '葡萄', 2], ['2023/3/25', 5, '西瓜', 8], ['2023/3/25', 6, '荔枝', 2],
  ['2023/3/28', 7, '哈密瓜', 9], ['2023/3/28', 8, '橘子', 1], ['2023/3/28', 9, '樱桃', 9],
  ['2023/3/28', 10, '车厘子', 7]];

const pivot = [
  ['head', '行标签', '求和项:数量', '求和项:数量2'],
  ['sub', '2023/3/24', 15, '28.30%'], ['item', '梨', 6, '11.32%'], ['item', '苹果', 5, '9.43%'], ['item', '香蕉', 4, '7.55%'],
  ['sub', '2023/3/25', 12, '22.64%'], ['item', '荔枝', 2, '3.77%'], ['item', '葡萄', 2, '3.77%'], ['item', '西瓜', 8, '15.09%'],
  ['sub', '2023/3/28', 26, '49.06%'], ['item', '车厘子', 7, '13.21%'], ['item', '哈密瓜', 9, '16.98%'],
  ['item', '橘子', 1, '1.89%'], ['item', '樱桃', 9, '16.98%'],
  ['total', '总计', 53, '100.00%']];

function pivotCell(line, i, row) {
  const kind = line[0];
  const classes = ['pv'];
  let text = line[i + 1];
  if (kind !== 'item') classes.push(kind);
  if (i === 0) {
    classes.push('label');
    if (kind === 'item') classes.push('item');
    if (kind === 'sub') text = '<i class="minus"></i>' + text;
    if (kind === 'head') text = '<button class="filter" aria-label="筛选"><i class="dd"></i></button>' + text;
  } else if (kind === 'item') classes.push('small');
  if (i === 2 && kind === 'item') classes.push('pct-col');
  if (i === 2 && row === 67) classes.push('cell-on');
  return `<td class="${classes.join(' ')}">${text}</td>`;
}

let html = '<colgroup><col style="width:23px">' +
  cols.map(c => c[1] ? `<col style="width:${c[1]}px">` : '<col>').join('') + '</colgroup><thead><tr><th></th>' +
  cols.map(c => `<th${c[0] === 'I' ? ' class="picked"' : ''}>${c[0]}</th>`).join('') + '</tr></thead><tbody>';

for (let row = 58; row <= 88; row++) {
  const order = orders[row - 59];
  const line = pivot[row - 59];
  html += `<tr><th${row === 67 ? ' class="picked"' : ''}>${row}</th>`;
  for (let c = 0; c < cols.length; c++) {
    const inPivot = c >= 6 && c <= 8;
    if (order && c < 4) html += `<td class="data">${order[c]}</td>`;
    else if (line && inPivot) html += pivotCell(line, c - 6, row);
    else if (row === 58 && inPivot) html += '<td class="above"></td>';
    else if (line && c === 5) html += '<td class="beside"></td>';
    else html += '<td></td>';
  }
  html += '</tr>';
}
document.getElementById('grid').innerHTML = html + '</tbody>';
```
